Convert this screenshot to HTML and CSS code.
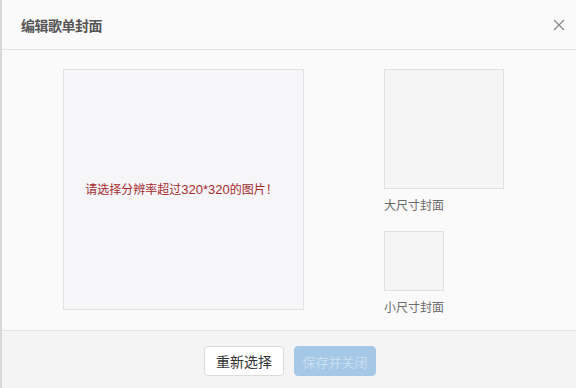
FILE: index.html
```html
<!DOCTYPE html>
<html lang="zh">
<head>
<meta charset="utf-8">
<link rel="stylesheet" href="styles.css">
</head>
<body>
<div class="dialog">
  <div class="header">
    <div class="title">编辑歌单封面</div>
    <svg class="close" width="12" height="12" viewBox="0 0 12 12"><path d="M1 1L11 11M11 1L1 11" stroke="#8a8a8a" stroke-width="1.3" fill="none"/></svg>
  </div>
  <div class="body">
    <div class="main-box"><span class="warn">请选择分辨率超过<span class="num">320*320</span>的图片！</span></div>
    <div class="side">
      <div class="big-box"></div>
      <div class="label">大尺寸封面</div>
      <div class="small-box"></div>
      <div class="label">小尺寸封面</div>
    </div>
  </div>
  <div class="footer">
    <button class="btn btn-default">重新选择</button>
    <button class="btn btn-primary">保存并关闭</button>
  </div>
</div>
</body>
</html>
```
FILE: styles.css
```css
html, body {
  margin: 0;
  padding: 0;
  background: #fafafa;
}
body {
  font-family: "Noto Sans CJK SC", "Liberation Sans", sans-serif;
}
.dialog {
  width: 574px;
  height: 388px;
  border-left: 2px solid #d8d8d8;
  display: flex;
  flex-direction: column;
  background: #fafafa;
}
.header {
  height: 49px;
  border-bottom: 1px solid #e3e3e3;
  display: flex;
  align-items: center;
  justify-content: space-between;
  padding: 0 11px 0 19px;
}
.title {
  font-size: 14px;
  font-weight: bold;
  color: #555;
  letter-spacing: -0.5px;
}
.close {
  display: block;
}
.body {
  height: 280px;
  box-sizing: border-box;
  padding: 19px 0 0 61px;
  display: flex;
  gap: 80px;
}
.main-box {
  width: 239px;
  height: 239px;
  border: 1px solid #e2e2e4;
  background: #f6f6f8;
  display: flex;
  align-items: center;
  justify-content: center;
}
.warn {
  font-size: 12px;
  color: #a62a2e;
  margin-right: 4px;
  margin-top: -2px;
}
.num {
  font-family: "Liberation Sans", sans-serif;
  font-size: 13px;
}
.side {
  display: flex;
  flex-direction: column;
}
.big-box {
  width: 118px;
  height: 118px;
  border: 1px solid #e2e2e2;
  background: #f5f5f5;
}
.small-box {
  width: 58px;
  height: 58px;
  border: 1px solid #e2e2e2;
  background: #f5f5f5;
  margin-top: 18px;
}
.label {
  font-size: 12px;
  color: #6a6a6a;
  line-height: 16px;
  margin-top: 8px;
}
.footer {
  flex: 1;
  border-top: 1px solid #e3e3e3;
  background: #f4f4f4;
  display: flex;
  justify-content: center;
  align-items: flex-start;
  padding: 15px 0 0 2px;
  gap: 10px;
}
.btn {
  height: 30px;
  border-radius: 4px;
  font-family: "Noto Sans CJK SC", "Liberation Sans", sans-serif;
  font-size: 14px;
  padding: 0;
  margin: 0;
  cursor: pointer;
}
.btn-default {
  width: 80px;
  background: #fff;
  border: 1px solid #dcdcdc;
  color: #333;
}
.btn-primary {
  width: 82px;
  background: #a5c8e6;
  border: 1px solid #a5c8e6;
  color: #c9def1;
  font-size: 13px;
}
```
